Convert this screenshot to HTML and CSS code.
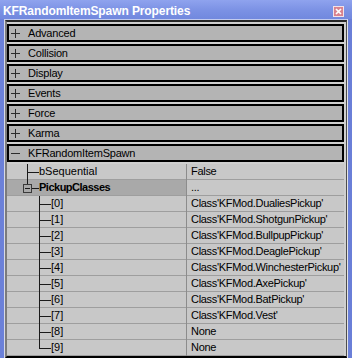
FILE: index.html
```html
<!DOCTYPE html>
<html>
<head>
<meta charset="utf-8">
<link rel="stylesheet" href="styles.css">
</head>
<body>
<div class="window">
  <div class="titlebar">
    <span class="title">KFRandomItemSpawn Properties</span>
    <svg class="close" viewBox="0 0 11 11"><rect x="0.5" y="0.5" width="10" height="10" fill="#d9838f" stroke="#f3e2e8"/><path d="M3 3L8 8M8 3L3 8" stroke="#fff" stroke-width="1.7"/></svg>
  </div>
  <div class="frame">
    <div class="client">
      <div class="panel">
        <div class="cat"><svg viewBox="0 0 9 9"><rect x="0" y="4" width="9" height="1"/><rect x="4" y="0" width="1" height="9"/></svg><span>Advanced</span></div>
        <div class="cat"><svg viewBox="0 0 9 9"><rect x="0" y="4" width="9" height="1"/><rect x="4" y="0" width="1" height="9"/></svg><span>Collision</span></div>
        <div class="cat"><svg viewBox="0 0 9 9"><rect x="0" y="4" width="9" height="1"/><rect x="4" y="0" width="1" height="9"/></svg><span>Display</span></div>
        <div class="cat"><svg viewBox="0 0 9 9"><rect x="0" y="4" width="9" height="1"/><rect x="4" y="0" width="1" height="9"/></svg><span>Events</span></div>
        <div class="cat"><svg viewBox="0 0 9 9"><rect x="0" y="4" width="9" height="1"/><rect x="4" y="0" width="1" height="9"/></svg><span>Force</span></div>
        <div class="cat"><svg viewBox="0 0 9 9"><rect x="0" y="4" width="9" height="1"/><rect x="4" y="0" width="1" height="9"/></svg><span>Karma</span></div>
        <div class="cat"><svg viewBox="0 0 9 9"><rect x="0" y="4" width="9" height="1"/></svg><span>KFRandomItemSpawn</span></div>

        <div class="prop">
          <div class="name"><svg class="t1" viewBox="0 0 32 16"><rect x="20" y="0" width="1" height="16"/><rect x="21" y="8" width="11" height="1"/></svg><span>bSequential</span></div>
          <div class="val">False</div>
        </div>
        <div class="prop">
          <div class="name sel"><svg class="t1" viewBox="0 0 32 16"><rect x="20" y="0" width="1" height="4"/><rect x="16.5" y="4.5" width="8" height="8" fill="none" stroke="#3a3a3a"/><rect x="18" y="8" width="5" height="1"/><rect x="25" y="8" width="7" height="1"/></svg><b>PickupClasses</b></div>
          <div class="val">...</div>
        </div>
        <div class="prop">
          <div class="name"><svg class="t2" viewBox="0 0 44 16"><rect x="32" y="0" width="1" height="16"/><rect x="33" y="8" width="11" height="1"/></svg><span>[0]</span></div>
          <div class="val">Class'KFMod.DualiesPickup'</div>
        </div>
        <div class="prop">
          <div class="name"><svg class="t2" viewBox="0 0 44 16"><rect x="32" y="0" width="1" height="16"/><rect x="33" y="8" width="11" height="1"/></svg><span>[1]</span></div>
          <div class="val">Class'KFMod.ShotgunPickup'</div>
        </div>
        <div class="prop">
          <div class="name"><svg class="t2" viewBox="0 0 44 16"><rect x="32" y="0" width="1" height="16"/><rect x="33" y="8" width="11" height="1"/></svg><span>[2]</span></div>
          <div class="val">Class'KFMod.BullpupPickup'</div>
        </div>
        <div class="prop">
          <div class="name"><svg class="t2" viewBox="0 0 44 16"><rect x="32" y="0" width="1" height="16"/><rect x="33" y="8" width="11" height="1"/></svg><span>[3]</span></div>
          <div class="val">Class'KFMod.DeaglePickup'</div>
        </div>
        <div class="prop">
          <div class="name"><svg class="t2" viewBox="0 0 44 16"><rect x="32" y="0" width="1" height="16"/><rect x="33" y="8" width="11" height="1"/></svg><span>[4]</span></div>
          <div class="val">Class'KFMod.WinchesterPickup'</div>
        </div>
        <div class="prop">
          <div class="name"><svg class="t2" viewBox="0 0 44 16"><rect x="32" y="0" width="1" height="16"/><rect x="33" y="8" width="11" height="1"/></svg><span>[5]</span></div>
          <div class="val">Class'KFMod.AxePickup'</div>
        </div>
        <div class="prop">
          <div class="name"><svg class="t2" viewBox="0 0 44 16"><rect x="32" y="0" width="1" height="16"/><rect x="33" y="8" width="11" height="1"/></svg><span>[6]</span></div>
          <div class="val">Class'KFMod.BatPickup'</div>
        </div>
        <div class="prop">
          <div class="name"><svg class="t2" viewBox="0 0 44 16"><rect x="32" y="0" width="1" height="16"/><rect x="33" y="8" width="11" height="1"/></svg><span>[7]</span></div>
          <div class="val">Class'KFMod.Vest'</div>
        </div>
        <div class="prop">
          <div class="name"><svg class="t2" viewBox="0 0 44 16"><rect x="32" y="0" width="1" height="16"/><rect x="33" y="8" width="11" height="1"/></svg><span>[8]</span></div>
          <div class="val">None</div>
        </div>
        <div class="prop">
          <div class="name"><svg class="t2" viewBox="0 0 44 16"><rect x="32" y="0" width="1" height="9"/><rect x="33" y="8" width="11" height="1"/></svg><span>[9]</span></div>
          <div class="val">None</div>
        </div>
      </div>
    </div>
  </div>
</div>
</body>
</html>
```
FILE: styles.css
```css
* { box-sizing: border-box; }
html, body { margin: 0; padding: 0; }
body {
  width: 352px;
  height: 358px;
  overflow: hidden;
  font-family: "Liberation Sans", Arial, sans-serif;
  font-size: 11px;
  color: #000;
  background: #6d82da;
}
.window {
  height: 358px;
  display: flex;
  flex-direction: column;
  background: #6d82da;
}
.titlebar {
  height: 19px;
  flex: none;
  display: flex;
  justify-content: space-between;
  align-items: flex-start;
  padding: 0 8px 0 3px;
  background: linear-gradient(#8fa3ee, #7b91e4 55%, #7188de);
}
.title {
  font-weight: bold;
  font-size: 12px;
  color: #fff;
  line-height: 15px;
  padding-top: 4px;
  white-space: nowrap;
  letter-spacing: -0.1px;
}
.close {
  width: 11px;
  height: 11px;
  margin-top: 6px;
  flex: none;
}
.frame {
  flex: 1;
  min-height: 0;
  display: flex;
  padding: 0 4px;
  background: linear-gradient(to right, #6c81d9, #6a7fd8);
}
.client {
  flex: 1;
  display: flex;
  flex-direction: column;
  border-top: 1px solid #c3cbee;
  border-left: 1px solid #d8dae6;
  border-right: 1px solid #e6e6e6;
}
.panel {
  flex: 1;
  border-top: 2px solid #262626;
  border-left: 2px solid #7c7c7c;
  border-right: 1px solid #4e4e4e;
  border-bottom: 2px solid #000;
  padding: 2px 2px 0 0;
  background: #cfcfcf;
  overflow: hidden;
}
.cat {
  height: 18px;
  border: 2px solid #000;
  margin-bottom: 2px;
  background: #b4b4b4;
  display: flex;
  align-items: center;
  padding-left: 2px;
  padding-top: 1px;
  line-height: 13px;
  white-space: nowrap;
  letter-spacing: -0.2px;
}
.cat svg {
  width: 9px;
  height: 9px;
  flex: none;
  margin-right: 8px;
  margin-top: -1px;
  fill: #2c2c2c;
}
.prop {
  display: flex;
  height: 16px;
  background: linear-gradient(to top, #9e9e9e 1px, #c8c8c8 1px);
}
.name {
  width: 179px;
  flex: none;
  display: flex;
  align-items: flex-start;
  line-height: 15px;
  white-space: nowrap;
}
.name b {
  letter-spacing: -0.5px;
}
.name.sel {
  background: linear-gradient(to top, #9e9e9e 1px, #a9a9a9 1px);
}
.name svg {
  flex: none;
  height: 16px;
  fill: #1a1a1a;
}
.name svg.t1 { width: 32px; }
.name svg.t2 { width: 44px; }
.val {
  flex: 1;
  min-width: 0;
  border-left: 1px solid #8c8c8c;
  padding-left: 4px;
  line-height: 15px;
  white-space: nowrap;
  overflow: hidden;
  letter-spacing: -0.3px;
}
```
